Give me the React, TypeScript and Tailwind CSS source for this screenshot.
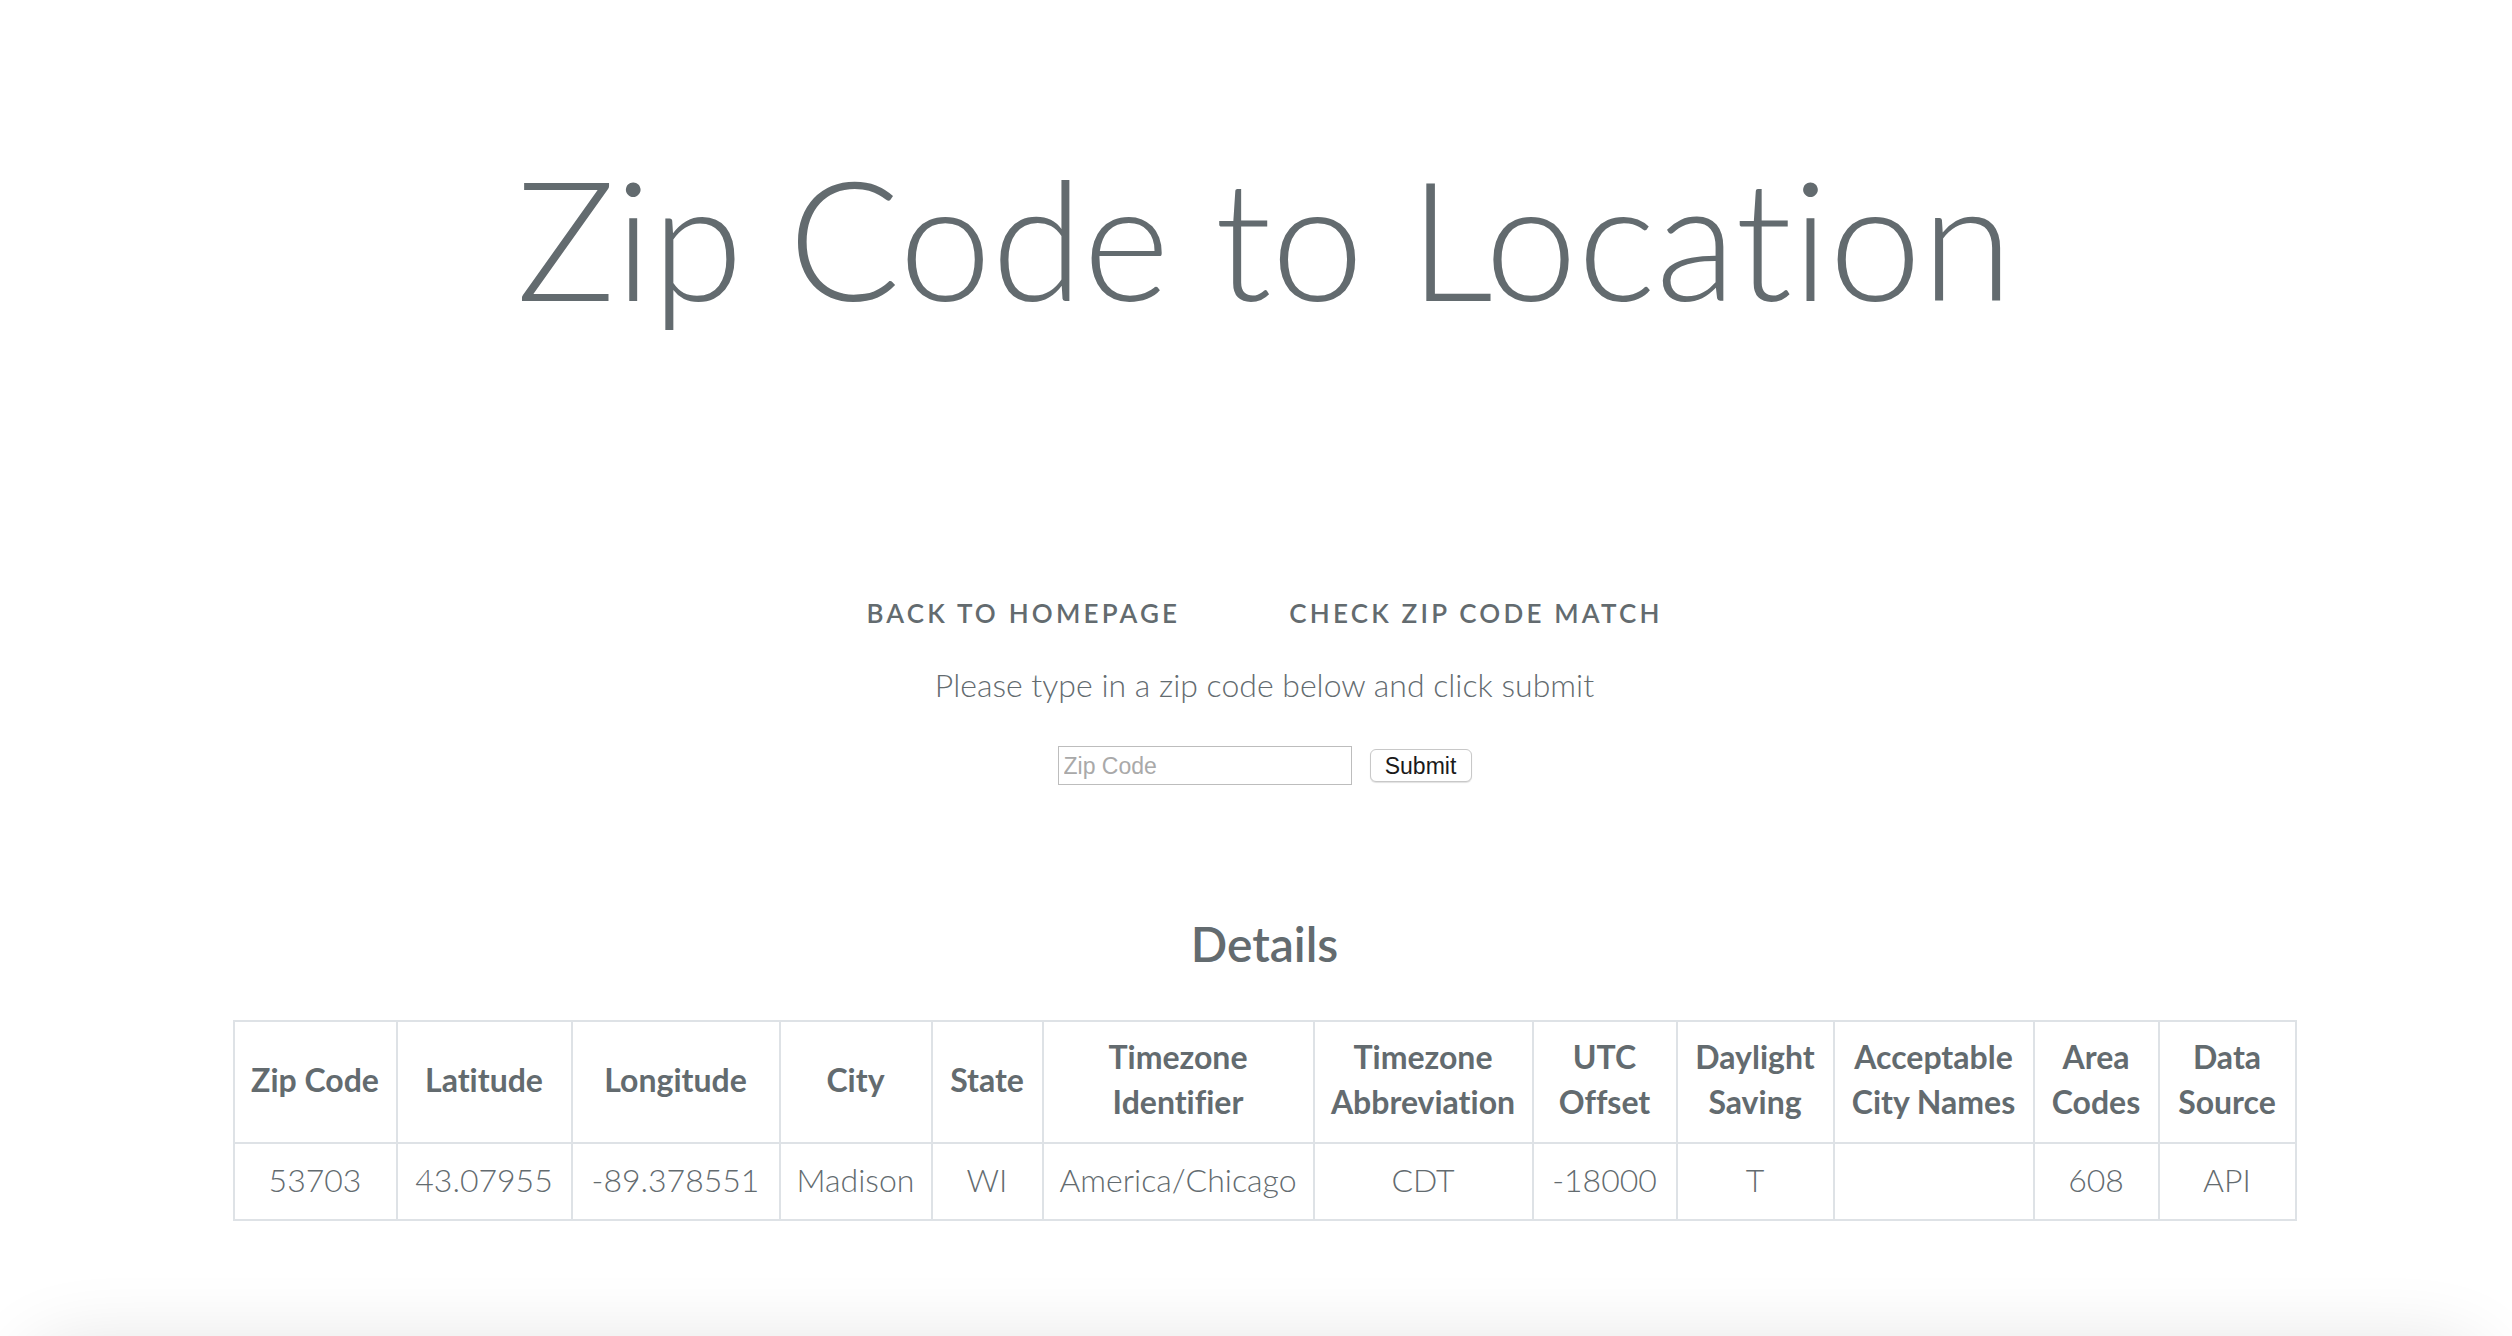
const columns = [
  { label: ["Zip Code"], value: "53703", width: 163 },
  { label: ["Latitude"], value: "43.07955", width: 175 },
  { label: ["Longitude"], value: "-89.378551", width: 208 },
  { label: ["City"], value: "Madison", width: 152 },
  { label: ["State"], value: "WI", width: 111 },
  { label: ["Timezone", "Identifier"], value: "America/Chicago", width: 271 },
  { label: ["Timezone", "Abbreviation"], value: "CDT", width: 219 },
  { label: ["UTC", "Offset"], value: "-18000", width: 144 },
  { label: ["Daylight", "Saving"], value: "T", width: 157 },
  { label: ["Acceptable", "City Names"], value: "", width: 200 },
  { label: ["Area", "Codes"], value: "608", width: 125 },
  { label: ["Data", "Source"], value: "API", width: 137 },
];

function DetailsTable() {
  return (
    <table className="w-[2062px] table-fixed border-collapse border-2 border-[#dee2e6] text-[32px] leading-[45px]">
      <colgroup>
        {columns.map((c) => (
          <col key={c.label.join(" ")} style={{ width: c.width }} />
        ))}
      </colgroup>
      <thead>
        <tr>
          {columns.map((c) => (
            <th
              key={c.label.join(" ")}
              className="whitespace-nowrap border-2 border-[#dee2e6] px-2 pt-[12px] pb-[18px] text-center align-middle font-bold"
            >
              {c.label.map((line, i) => (
                <div key={i}>{line}</div>
              ))}
            </th>
          ))}
        </tr>
      </thead>
      <tbody>
        <tr>
          {columns.map((c) => (
            <td
              key={c.label.join(" ")}
              className="whitespace-nowrap border-2 border-[#dee2e6] px-2 pt-[13px] pb-[17px] text-center align-middle font-light"
            >
              {c.value}
            </td>
          ))}
        </tr>
      </tbody>
    </table>
  );
}

export default function App() {
  return (
    <div className="h-screen overflow-hidden bg-white font-['Lato','Noto_Sans',sans-serif] text-[#636b6f] [font-variant-ligatures:none]">
      <div className="flex flex-col items-center pl-[17px]">
        <h1 className="mt-[154px] whitespace-nowrap text-[166px] font-light leading-none">
          Zip Code to Location
        </h1>

        <nav className="mt-[280px] flex gap-[109px] text-[26px] font-semibold uppercase leading-none tracking-[3.2px]">
          <a href="#">Back to homepage</a>
          <a href="#">Check zip code match</a>
        </nav>

        <p className="mt-[43px] text-[32px] font-light leading-none">
          Please type in a zip code below and click submit
        </p>

        <form className="mt-[45px] flex items-center gap-[18px] font-['Liberation_Sans',Arial,sans-serif]">
          <input
            type="text"
            placeholder="Zip Code"
            className="h-[39px] w-[294px] border border-[#bdbdbd] bg-white px-[5px] pt-[2px] text-[23px] text-[#222] outline-none placeholder:text-[#a9a9a9]"
          />
          <button
            type="button"
            className="h-[33px] w-[102px] rounded-[6px] border border-[#c8c8c8] bg-white pt-[2px] text-[23px] leading-none text-[#1a1a1a] shadow-[0_1px_1px_rgba(0,0,0,0.12)]"
          >
            Submit
          </button>
        </form>

        <h3 className="mt-[135px] text-[48px] font-semibold leading-none">Details</h3>

        <div className="mt-[52px]">
          <DetailsTable />
        </div>
      </div>

      <div className="mx-[30px] mt-[129px] h-[300px] rounded-[40px] bg-white shadow-[0_0_80px_rgba(0,0,0,0.14)]" />
    </div>
  );
}
